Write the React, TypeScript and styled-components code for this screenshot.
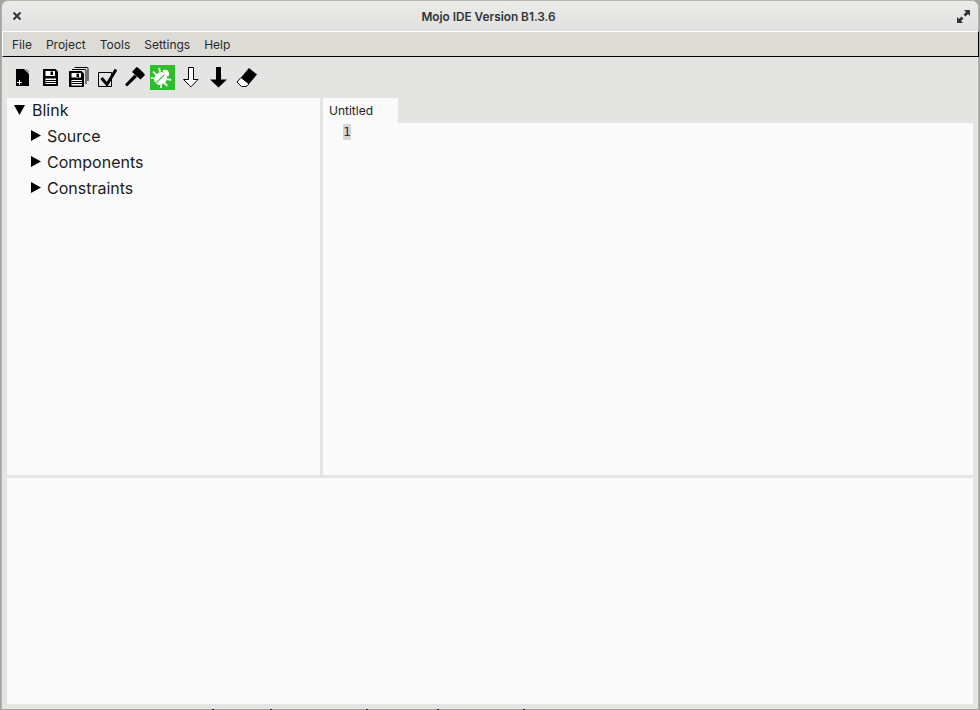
import styled, { createGlobalStyle } from 'styled-components';

const GlobalStyle = createGlobalStyle`
  html, body {
    margin: 0;
    padding: 0;
    width: 980px;
    height: 710px;
    overflow: hidden;
    background: #fff;
    font-family: Inter, "Noto Sans", sans-serif;
  }
`;

// the desktop behind the window only shows as a thin edge with a few dark specks
const Screen = styled.div`
  width: 980px;
  height: 710px;
  box-sizing: border-box;
  padding: 0 1px 1px 1px;
  background:
    linear-gradient(#222, #222) 212px 709px / 2px 1px no-repeat,
    linear-gradient(#222, #222) 270px 709px / 2px 1px no-repeat,
    linear-gradient(#222, #222) 366px 709px / 2px 1px no-repeat,
    linear-gradient(#222, #222) 437px 709px / 2px 1px no-repeat,
    linear-gradient(#222, #222) 523px 709px / 2px 1px no-repeat,
    #a4a4a2;
`;

const Window = styled.div`
  height: 709px;
  display: flex;
  flex-direction: column;
  background: #e4e4e2;
  border-radius: 7px 7px 0 0;
  border-top: 1px solid #b4b4b2;
  border-left: 1px solid #b0b0ae;
  border-right: 1px solid #b0b0ae;
  box-sizing: border-box;
`;

const TitleBar = styled.div`
  height: 30px;
  flex-shrink: 0;
  display: flex;
  align-items: center;
  justify-content: space-between;
  padding: 0 8px 0 9px;
  background: linear-gradient(#ebebea, #e0e0df);
  border-radius: 7px 7px 0 0;
`;

const WindowButton = styled.button<{ $size: number }>`
  width: ${(p) => p.$size}px;
  height: ${(p) => p.$size}px;
  padding: 0;
  border: none;
  background: none;
  display: flex;
`;

const Title = styled.div`
  padding-top: 1px;
  margin-right: 3px;
  font-size: 11.8px;
  font-weight: 600;
  color: #2e3436;
`;

const MenuBar = styled.div`
  height: 24px;
  flex-shrink: 0;
  display: flex;
  align-items: center;
  gap: 14px;
  padding-left: 9px;
  background: #dcdbd6;
  border-top: 1px solid #ffffff;
  border-left: 1px solid #ffffff;
  border-right: 1px solid #000000;
  border-bottom: 1px solid #000000;
  box-sizing: content-box;
  margin-right: -1px;
`;

const MenuItem = styled.span`
  font-size: 12px;
  color: #2a2a2a;
`;

const Toolbar = styled.div`
  height: 41px;
  flex-shrink: 0;
  display: flex;
  align-items: flex-start;
  gap: 3px;
  padding: 8px 0 0 8px;
  box-sizing: border-box;
`;

const ToolButton = styled.div<{ $active?: boolean }>`
  width: 25px;
  height: 25px;
  box-sizing: border-box;
  padding: 1px 0 0 1px;
  background: ${(p) => (p.$active ? '#2dbd2d' : 'transparent')};
`;

const Workspace = styled.div`
  flex: 1;
  display: flex;
  flex-direction: column;
  gap: 3px;
  padding: 0 5px 5px 5px;
  min-height: 0;
`;

const TopPanes = styled.div`
  height: 377px;
  flex-shrink: 0;
  display: flex;
  gap: 3px;
`;

const TreePane = styled.div`
  width: 313px;
  flex-shrink: 0;
  background: #fafafa;
`;

const TreeRow = styled.div<{ $depth: number }>`
  height: 26px;
  box-sizing: border-box;
  padding-bottom: 2px;
  display: flex;
  align-items: center;
  padding-left: ${(p) => (p.$depth === 0 ? 7 : 24)}px;
  gap: ${(p) => (p.$depth === 0 ? 7 : 6)}px;
  font-size: 16px;
  color: #1c1c1c;
`;

const Arrow = styled.svg`
  width: 10px;
  height: 11px;
  flex-shrink: 0;
  margin-top: -1px;
`;

const DownArrow = styled.svg`
  width: 11px;
  height: 10px;
  flex-shrink: 0;
  margin-top: -1px;
`;

const EditorPane = styled.div`
  flex: 1;
  display: flex;
  flex-direction: column;
  min-width: 0;
`;

const TabStrip = styled.div`
  height: 25px;
  flex-shrink: 0;
  display: flex;
`;

const Tab = styled.div`
  width: 75px;
  box-sizing: border-box;
  padding: 5px 0 0 6px;
  background: #fafafa;
  font-size: 12px;
  line-height: 15px;
  color: #222222;
`;

const Editor = styled.div`
  flex: 1;
  background: #fafafa;
  padding: 1px 0 0 20px;
`;

const LineNumber = styled.span`
  display: block;
  width: 8px;
  height: 16px;
  background: #d6d6d6;
  font-family: "DejaVu Sans Mono", monospace;
  font-size: 13px;
  line-height: 16px;
  color: #333333;
`;

const OutputPane = styled.div`
  flex: 1;
  background: #fafafa;
`;

const Glyph = styled.svg`
  width: 22px;
  height: 22px;
  display: block;
`;

function NewFileIcon() {
  return (
    <Glyph viewBox="0 0 22 22">
      <path d="M5 3H13L18 8V20H5z" fill="#000" />
      <path d="M14.500 3h1L18 5.500V7z" fill="#666" />
      <path d="M6 16.500h5M8.500 14v5" stroke="#fff" strokeWidth="1" fill="none" />
    </Glyph>
  );
}

function SaveIcon() {
  return (
    <Glyph viewBox="0 0 22 22">
      <path d="M4 4C4 3.400 4.400 3 5 3H16.500L19 5.500V19c0 .6-.4 1-1 1H5c-.6 0-1-.4-1-1z" fill="#000" />
      <path d="M6.500 5H16v5H6.500z" fill="#fff" />
      <path d="M11.500 5.500H14V9h-2.500z" fill="#000" />
      <path d="M6.500 12.500H17V18H6.500z" fill="#fff" />
      <path d="M6.500 14.500H17M6.500 16.500H17" stroke="#000" strokeWidth="1" />
    </Glyph>
  );
}

function SaveAllIcon() {
  return (
    <Glyph viewBox="0 0 22 22">
      <path d="M7.500 1.500h12.500a1 1 0 0 1 1 1V15" fill="none" stroke="#000" strokeWidth="1" />
      <path d="M5 3.500h13a1 1 0 0 1 1 1V18" fill="none" stroke="#000" strokeWidth="1" />
      <path d="M2 6c0-.6.4-1 1-1H14.500L17 7.500V20c0 .6-.4 1-1 1H3c-.6 0-1-.4-1-1z" fill="#000" />
      <path d="M4.500 7H14v4.500H4.500z" fill="#fff" />
      <path d="M9.500 7.500H12V11H9.500z" fill="#000" />
      <path d="M4.500 14H15v5.500H4.500z" fill="#fff" />
      <path d="M4.500 15.500H15M4.500 17.500H15" stroke="#000" strokeWidth="1" />
    </Glyph>
  );
}

function CheckIcon() {
  return (
    <Glyph viewBox="0 0 22 22">
      <path d="M3.500 6.500h13v14h-13z" fill="none" stroke="#000" strokeWidth="1" />
      <path d="M6.500 12l5.500 6.500L21 3.500" fill="none" stroke="#000" strokeWidth="3" />
    </Glyph>
  );
}

function HammerIcon() {
  return (
    <Glyph viewBox="0 0 22 22">
      <path d="M2 18.500l9.500-10 2.500 2.500-10 9.500z" fill="#000" />
      <path d="M9 6l4.500-5c2.500 1 7 5.500 8.500 8l-4.500 4.500z" fill="#000" />
    </Glyph>
  );
}

function BugIcon() {
  return (
    <Glyph viewBox="0 0 22 22">
      <g transform="rotate(45 11 11)">
        <ellipse cx="11" cy="13" rx="6" ry="7" fill="#fff" />
        <path d="M7 6.500C7 4 9 2.500 11 2.500S15 4 15 6.500z" fill="#fff" />
        <path d="M11 7.500V20" stroke="#2dbd2d" strokeWidth="1" />
        <path
          d="M6 9L2.500 6.500M5 13.500H1M6 17.500L2.500 20.500M16 9L19.500 6.500M17 13.500H21M16 17.500L19.500 20.500"
          stroke="#fff"
          strokeWidth="1.800"
          fill="none"
        />
      </g>
    </Glyph>
  );
}

function ArrowOutlineIcon() {
  return (
    <Glyph viewBox="0 0 22 22">
      <path d="M9.500 1.500h5v12h4.500L12 20.800 4.500 13.500h5z" fill="#fff" stroke="#000" strokeWidth="1" />
    </Glyph>
  );
}

function ArrowSolidIcon() {
  return (
    <Glyph viewBox="0 0 22 22">
      <path d="M9 1h5v12.500h6L11.500 21.500 3 13.500h6z" fill="#000" />
    </Glyph>
  );
}

function EraserIcon() {
  return (
    <Glyph viewBox="0 0 22 22">
      <path d="M14 2l8 6.500-8 9.500-8-6.500z" fill="#000" />
      <path d="M6 11.500l8 6.500-3 2.500H6.500L2 16z" fill="#fff" stroke="#000" strokeWidth="1" />
    </Glyph>
  );
}

const TOOLS = [
  { id: 'new', icon: <NewFileIcon /> },
  { id: 'save', icon: <SaveIcon /> },
  { id: 'saveAll', icon: <SaveAllIcon /> },
  { id: 'check', icon: <CheckIcon /> },
  { id: 'build', icon: <HammerIcon /> },
  { id: 'debug', icon: <BugIcon />, active: true },
  { id: 'load', icon: <ArrowOutlineIcon /> },
  { id: 'flash', icon: <ArrowSolidIcon /> },
  { id: 'erase', icon: <EraserIcon /> },
];

const MENUS = ['File', 'Project', 'Tools', 'Settings', 'Help'];
const TREE_CHILDREN = ['Source', 'Components', 'Constraints'];

export default function App() {
  return (
    <Screen>
      <GlobalStyle />
      <Window>
        <TitleBar>
          <WindowButton $size={12}>
            <svg viewBox="0 0 12 12" width="12" height="12">
              <path d="M2.500 2.500l7 7M9.500 2.500l-7 7" stroke="#2e3436" strokeWidth="2" />
            </svg>
          </WindowButton>
          <Title>Mojo IDE Version B1.3.6</Title>
          <WindowButton $size={13}>
            <svg viewBox="0 0 13 13" width="13" height="13">
              <path d="M7 0h6v6l-2-2-2.500 2.500-2-2L9 2zM0 13V7l2 2 2.500-2.500 2 2L4 11l2 2z" fill="#2e3436" />
            </svg>
          </WindowButton>
        </TitleBar>
        <MenuBar>
          {MENUS.map((menu) => (
            <MenuItem key={menu}>{menu}</MenuItem>
          ))}
        </MenuBar>
        <Toolbar>
          {TOOLS.map((tool) => (
            <ToolButton key={tool.id} $active={tool.active}>
              {tool.icon}
            </ToolButton>
          ))}
        </Toolbar>
        <Workspace>
          <TopPanes>
            <TreePane>
              <TreeRow $depth={0}>
                <DownArrow viewBox="0 0 11 10">
                  <path d="M0 0h11L5.500 10z" fill="#000" />
                </DownArrow>
                Blink
              </TreeRow>
              {TREE_CHILDREN.map((name) => (
                <TreeRow key={name} $depth={1}>
                  <Arrow viewBox="0 0 10 11">
                    <path d="M0 0l10 5.500L0 11z" fill="#000" />
                  </Arrow>
                  {name}
                </TreeRow>
              ))}
            </TreePane>
            <EditorPane>
              <TabStrip>
                <Tab>Untitled</Tab>
              </TabStrip>
              <Editor>
                <LineNumber>1</LineNumber>
              </Editor>
            </EditorPane>
          </TopPanes>
          <OutputPane />
        </Workspace>
      </Window>
    </Screen>
  );
}
